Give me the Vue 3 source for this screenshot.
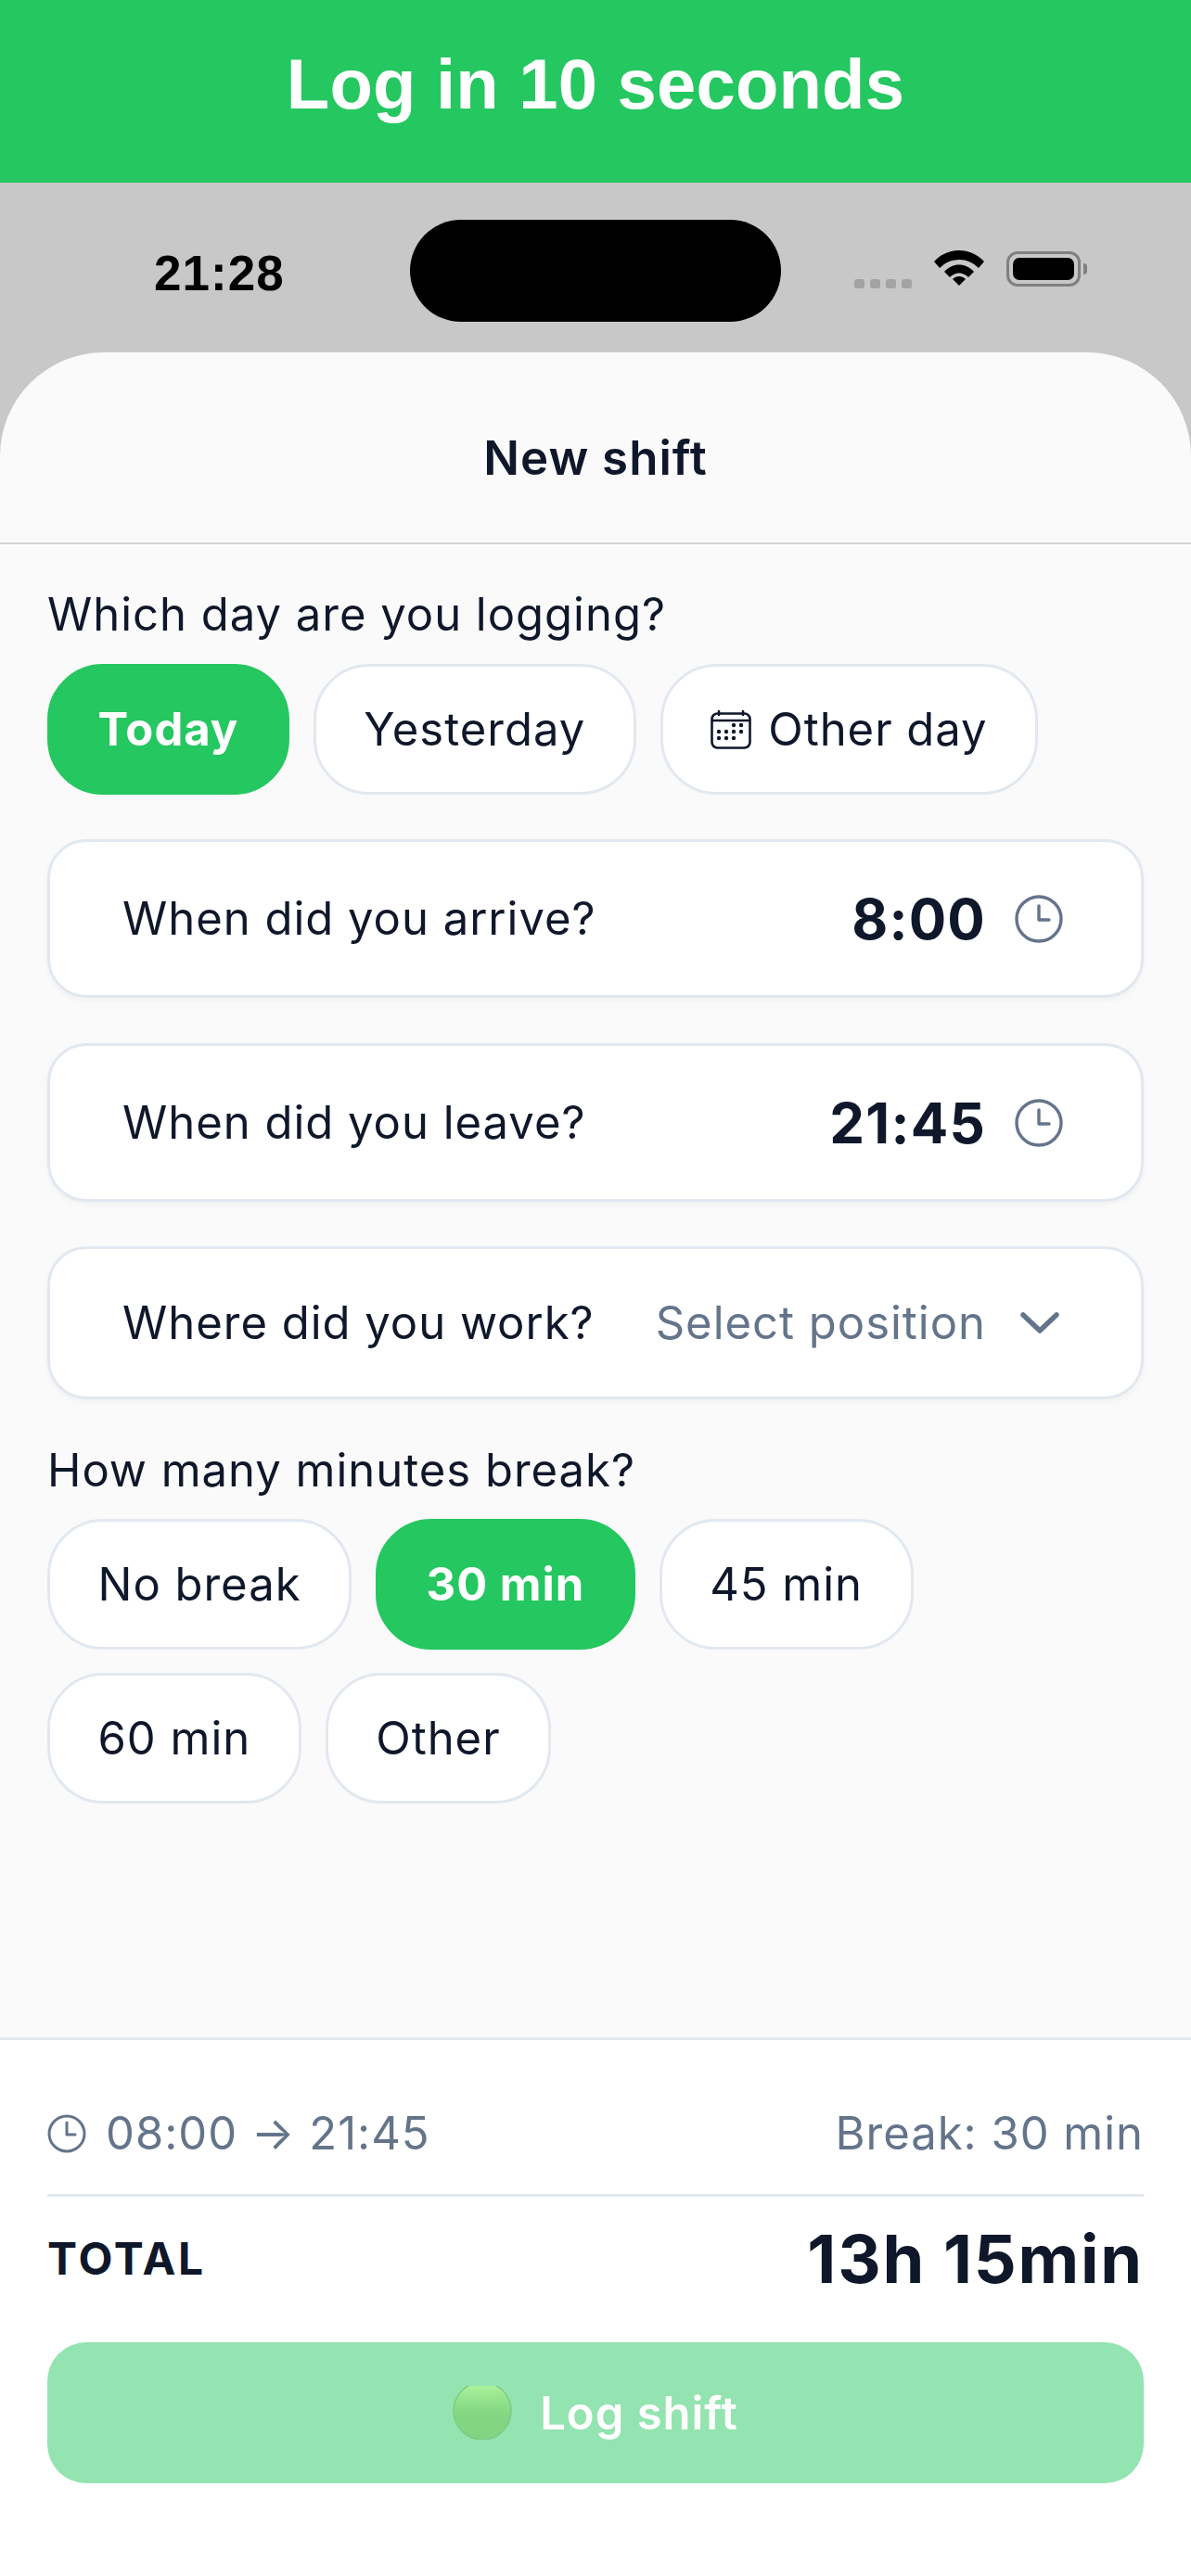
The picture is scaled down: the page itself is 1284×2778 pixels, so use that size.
<script setup>
const dayOptions = [
  { label: 'Today', active: true },
  { label: 'Yesterday' },
  { label: 'Other day', calendar: true },
];
const breakOptions = [
  { label: 'No break' },
  { label: '30 min', active: true },
  { label: '45 min' },
  { label: '60 min' },
  { label: 'Other' },
];
const calendarDots = [
  [25, 16], [33, 16],
  [9, 23], [17, 23], [25, 23], [33, 23],
  [9, 30], [17, 30], [25, 30],
];
</script>

<template>
  <div class="page">
    <header class="banner">Log in 10 seconds</header>

    <div class="status-area">
      <div class="status-bar">
        <span class="status-time">21:28</span>
        <div class="island"></div>
        <div class="status-icons">
          <div class="signal"><i></i><i></i><i></i><i></i></div>
          <svg class="wifi" viewBox="0 0 54 38" width="54" height="38">
            <path d="M0 12 C15 -4 39 -4 54 12 L48 19 C36 7 18 7 6 19 Z" fill="#000" />
            <path d="M11 23 C20 13 34 13 43 23 L37 29 C31 23 23 23 17 29 Z" fill="#000" />
            <path d="M20 31 C24 27 30 27 34 31 L27 38 Z" fill="#000" />
          </svg>
          <div class="battery"><div class="battery-fill"></div></div>
          <div class="battery-cap"></div>
        </div>
      </div>

      <div class="sheet">
        <div class="sheet-head">New shift</div>

        <main class="form">
          <div class="question">Which day are you logging?</div>
          <div class="chips">
            <div v-for="opt in dayOptions" :key="opt.label" class="chip" :class="{ active: opt.active }">
              <svg v-if="opt.calendar" class="cal" viewBox="0 0 44 42" width="44" height="42" fill="none">
                <rect x="1.5" y="3.5" width="41" height="37" rx="6" stroke="#0f172a" stroke-width="2.6" />
                <path d="M2 11h40M9 1v4M35 1v4" stroke="#0f172a" stroke-width="2.6" stroke-linecap="round" />
                <circle v-for="d in calendarDots" :key="d.join()" :cx="d[0]" :cy="d[1]" r="2.2" fill="#0f172a" />
              </svg>
              {{ opt.label }}
            </div>
          </div>

          <div class="field time-field">
            <span class="field-label">When did you arrive?</span>
            <div class="field-value">
              <span class="time">8:00</span>
              <svg class="clock" viewBox="0 0 52 52" width="52" height="52" fill="none" stroke="#64748b" stroke-width="3.4" stroke-linecap="round" stroke-linejoin="round">
                <circle cx="26" cy="26" r="24" />
                <path d="M26 12v15h11" />
              </svg>
            </div>
          </div>

          <div class="field time-field">
            <span class="field-label">When did you leave?</span>
            <div class="field-value">
              <span class="time">21:45</span>
              <svg class="clock" viewBox="0 0 52 52" width="52" height="52" fill="none" stroke="#64748b" stroke-width="3.4" stroke-linecap="round" stroke-linejoin="round">
                <circle cx="26" cy="26" r="24" />
                <path d="M26 12v15h11" />
              </svg>
            </div>
          </div>

          <div class="field position-field">
            <span class="field-label">Where did you work?</span>
            <div class="field-value">
              <span class="placeholder">Select position</span>
              <svg class="chevron" viewBox="0 0 44 26" width="44" height="26" fill="none" stroke="#64748b" stroke-width="5.5" stroke-linecap="round" stroke-linejoin="round">
                <path d="M4 4l18 17L40 4" />
              </svg>
            </div>
          </div>

          <div class="question break-question">How many minutes break?</div>
          <div class="chips break-chips">
            <div v-for="opt in breakOptions" :key="opt.label" class="chip" :class="{ active: opt.active }">
              {{ opt.label }}
            </div>
          </div>
        </main>

        <footer class="summary">
          <div class="summary-row">
            <div class="range">
              <svg viewBox="0 0 42 42" width="42" height="42" fill="none" stroke="#64748b" stroke-width="3" stroke-linecap="round" stroke-linejoin="round">
                <circle cx="21" cy="21" r="19" />
                <path d="M21 9v13h9" />
              </svg>
              <span>08:00 → 21:45</span>
            </div>
            <span>Break: 30 min</span>
          </div>
          <div class="total-row">
            <span class="total-label">TOTAL</span>
            <span class="total-value">13h 15min</span>
          </div>
          <button class="log-btn">
            <svg class="dot" viewBox="0 0 64 58" width="64" height="58">
              <defs>
                <linearGradient id="dotFill" x1="0" y1="0" x2="0" y2="1">
                  <stop offset="0" stop-color="#b0f5a0" />
                  <stop offset="0.35" stop-color="#90e08a" />
                  <stop offset="0.6" stop-color="#82d582" />
                  <stop offset="1" stop-color="#84d384" />
                </linearGradient>
              </defs>
              <circle cx="32" cy="27" r="31" fill="url(#dotFill)" stroke="#7ccb84" stroke-width="1.5" />
            </svg>
            Log shift
          </button>
        </footer>
      </div>
    </div>
  </div>
</template>

<style scoped>
.page {
  width: 1284px;
  height: 2778px;
  display: flex;
  flex-direction: column;
  overflow: hidden;
  font-family: Inter, "Noto Sans", sans-serif;
  color: #0f172a;
  background: #fff;
}

/* em has to resolve against each element's own font size */
.page * {
  letter-spacing: 0.02em;
}

.banner {
  height: 197px;
  flex-shrink: 0;
  display: flex;
  align-items: center;
  justify-content: center;
  background: #25c760;
  color: #fff;
  font-family: "Liberation Sans", Arial, sans-serif;
  font-weight: 700;
  font-size: 76px;
  letter-spacing: 0.2px;
  padding-bottom: 16px;
  box-sizing: border-box;
}

.status-area {
  flex: 1;
  display: flex;
  flex-direction: column;
  min-height: 0;
  background: #c8c8c8;
}

.status-bar {
  height: 183px;
  flex-shrink: 0;
  position: relative;
}

.status-time {
  position: absolute;
  left: 166px;
  top: 70px;
  font-family: "Liberation Sans", Arial, sans-serif;
  font-size: 53px;
  font-weight: 700;
  line-height: 56px;
  color: #000;
}

.island {
  position: absolute;
  left: 442px;
  top: 40px;
  width: 400px;
  height: 110px;
  border-radius: 55px;
  background: #000;
}

.status-icons {
  position: absolute;
  left: 921px;
  top: 74px;
  display: flex;
  align-items: flex-start;
}

.signal {
  display: flex;
  gap: 6px;
  margin-top: 30px;
  margin-right: 24px;
}

.signal i {
  width: 11px;
  height: 10px;
  border-radius: 3px;
  background: #a3a3a3;
}

.wifi {
  margin-top: -1px;
  margin-right: 24px;
}

.battery {
  width: 80px;
  height: 38px;
  box-sizing: border-box;
  padding: 4px;
  border: 3px solid #808080;
  border-radius: 12px;
}

.battery-fill {
  height: 100%;
  border-radius: 7px;
  background: #000;
}

.battery-cap {
  width: 4px;
  height: 12px;
  margin: 13px 0 0 3px;
  border-radius: 0 6px 6px 0;
  background: #808080;
}

.sheet {
  flex: 1;
  min-height: 0;
  display: flex;
  flex-direction: column;
  background: #fafafa;
  border-radius: 112px 112px 0 0;
}

.sheet-head {
  height: 207px;
  flex-shrink: 0;
  box-sizing: border-box;
  display: flex;
  align-items: center;
  justify-content: center;
  padding-top: 22px;
  border-bottom: 2px solid #d4d4d8;
  font-size: 51px;
  font-weight: 600;
  color: #0f172a;
}

.form {
  flex: 1;
  min-height: 0;
  padding: 46px 51px 0;
}

.question {
  font-size: 49px;
  line-height: 60px;
  margin-bottom: 23px;
}

.chips {
  display: flex;
  flex-wrap: wrap;
  gap: 25px 26px;
}

.chip {
  height: 141px;
  box-sizing: border-box;
  display: flex;
  align-items: center;
  gap: 18px;
  padding: 0 51.5px;
  border: 3px solid #e2e8f0;
  border-radius: 60px;
  background: #fff;
  font-size: 49px;
  white-space: nowrap;
}

.chip.active {
  background: #25c760;
  border-color: #25c760;
  color: #fff;
  font-weight: 700;
}

.field {
  box-sizing: border-box;
  display: flex;
  align-items: center;
  justify-content: space-between;
  padding: 0 84px 0 78px;
  border: 3px solid #e2e8f0;
  border-radius: 42px;
  background: #fff;
  box-shadow: 0 3px 6px rgba(15, 23, 42, 0.04);
}

.time-field {
  height: 171px;
  margin-bottom: 49px;
}

.chips + .time-field {
  margin-top: 48px;
}

.position-field {
  height: 165px;
  margin-top: -1px;
  padding-right: 87px;
}

.field-label {
  font-size: 49px;
}

.field-value {
  display: flex;
  align-items: center;
  gap: 31px;
}

.time {
  font-size: 60px;
  font-weight: 700;
}

.placeholder {
  font-size: 49px;
  color: #64748b;
}

.chevron {
  margin-left: 5px;
}

.break-question {
  margin-top: 47px;
  margin-bottom: 22px;
}

.summary {
  height: 581px;
  flex-shrink: 0;
  box-sizing: border-box;
  padding: 71px 51px 0;
  background: #fff;
  border-top: 3px solid #e2e8f0;
}

.summary-row {
  height: 95px;
  box-sizing: border-box;
  display: flex;
  align-items: flex-start;
  justify-content: space-between;
  font-size: 49px;
  line-height: 60px;
  color: #64748b;
}

.range {
  display: flex;
  align-items: center;
  gap: 21px;
}

.total-row {
  height: 136px;
  box-sizing: border-box;
  display: flex;
  align-items: center;
  justify-content: space-between;
  border-top: 3px solid #e2e8f0;
}

.total-label {
  font-size: 48px;
  font-weight: 700;
  letter-spacing: 0.06em;
}

.total-value {
  font-size: 72px;
  font-weight: 700;
  letter-spacing: 0.025em;
}

.log-btn {
  width: 100%;
  height: 152px;
  margin-top: 24px;
  display: flex;
  align-items: center;
  justify-content: center;
  gap: 30px;
  border: none;
  border-radius: 42px;
  background: #93e4b0;
  color: #fff;
  font-family: inherit;
  font-size: 49px;
  font-weight: 600;
}
</style>
